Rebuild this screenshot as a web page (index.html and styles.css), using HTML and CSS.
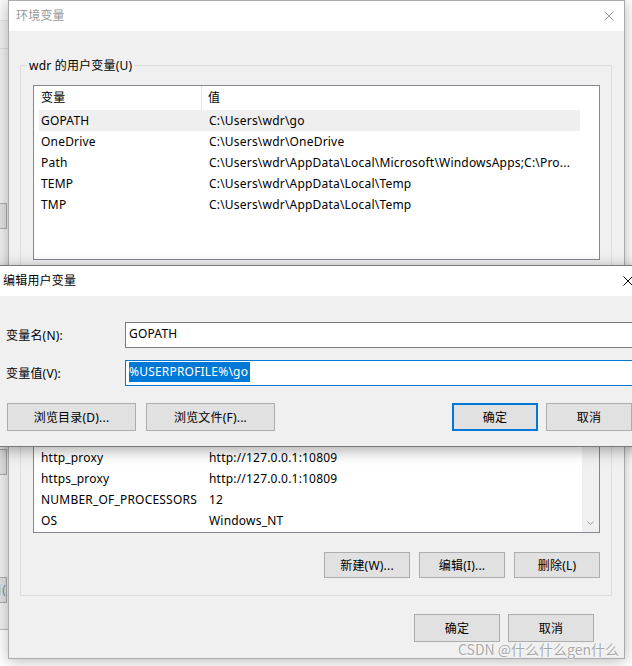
FILE: index.html
```html
<!DOCTYPE html>
<html lang="zh-CN">
<head>
<meta charset="utf-8">
<title>环境变量</title>
<link rel="stylesheet" href="styles.css">
</head>
<body>
<div class="desktop">
  <div class="bgwin">
    <div class="bg-title"></div>
    <div class="bg-line l1"></div>
    <div class="bg-btn b1"></div>
    <div class="bg-btn b2"></div>
    <div class="bg-btn b3">目(</div>
  </div>

  <div class="win main">
    <div class="titlebar">
      <span class="title inactive">环境变量</span>
      <svg class="close inactive-x" width="10" height="10" viewBox="0 0 10 10"><path d="M0.5 0.5L9.5 9.5M9.5 0.5L0.5 9.5" stroke="currentColor" stroke-width="1" fill="none"/></svg>
    </div>
    <div class="main-body">
      <div class="group g1">
        <div class="legend">wdr 的用户变量(U)</div>
        <div class="list">
          <div class="lhead">
            <div class="hcol c1">变量</div>
            <div class="hcol c2">值</div>
          </div>
          <div class="row sel"><span class="cell n">GOPATH</span><span class="cell v">C:\Users\wdr\go</span></div>
          <div class="row"><span class="cell n">OneDrive</span><span class="cell v">C:\Users\wdr\OneDrive</span></div>
          <div class="row"><span class="cell n">Path</span><span class="cell v">C:\Users\wdr\AppData\Local\Microsoft\WindowsApps;C:\Pro...</span></div>
          <div class="row"><span class="cell n">TEMP</span><span class="cell v">C:\Users\wdr\AppData\Local\Temp</span></div>
          <div class="row"><span class="cell n">TMP</span><span class="cell v">C:\Users\wdr\AppData\Local\Temp</span></div>
        </div>
        <div class="btnrow covered">
          <button class="btn">新建(N)...</button>
          <button class="btn">编辑(E)...</button>
          <button class="btn">删除(D)</button>
        </div>
      </div>

      <div class="group g2">
        <div class="legend covered">系统变量(S)</div>
        <div class="list">
          <div class="lhead covered">
            <div class="hcol c1">变量</div>
            <div class="hcol c2">值</div>
          </div>
          <div class="rows2">
            <div class="row covered"><span class="cell n">ComSpec</span><span class="cell v">C:\Windows\system32\cmd.exe</span></div>
            <div class="row covered"><span class="cell n">DriverData</span><span class="cell v">C:\Windows\System32\Drivers\DriverData</span></div>
            <div class="row covered"><span class="cell n">GOROOT</span><span class="cell v">C:\Program Files\Go</span></div>
            <div class="row"><span class="cell n">http_proxy</span><span class="cell v">http://127.0.0.1:10809</span></div>
            <div class="row"><span class="cell n">https_proxy</span><span class="cell v">http://127.0.0.1:10809</span></div>
            <div class="row"><span class="cell n">NUMBER_OF_PROCESSORS</span><span class="cell v">12</span></div>
            <div class="row"><span class="cell n">OS</span><span class="cell v">Windows_NT</span></div>
          </div>
          <div class="vscroll">
            <svg class="arrow-down" width="7" height="4" viewBox="0 0 7 4"><path d="M0.5 0.5L3.5 3.5L6.5 0.5" stroke="#9a9a9a" stroke-width="1" fill="none"/></svg>
          </div>
        </div>
        <div class="btnrow">
          <button class="btn">新建(W)...</button>
          <button class="btn">编辑(I)...</button>
          <button class="btn">删除(L)</button>
        </div>
      </div>

      <div class="footer">
        <button class="btn tall">确定</button>
        <button class="btn tall">取消</button>
      </div>
    </div>
  </div>

  <div class="win edit">
    <div class="titlebar edit-title">
      <span class="title">编辑用户变量</span>
      <svg class="close" width="10" height="10" viewBox="0 0 10 10"><path d="M0.5 0.5L9.5 9.5M9.5 0.5L0.5 9.5" stroke="currentColor" stroke-width="1" fill="none"/></svg>
    </div>
    <div class="edit-body">
      <div class="field">
        <label class="flabel">变量名(N):</label>
        <div class="input">GOPATH</div>
      </div>
      <div class="field f2">
        <label class="flabel">变量值(V):</label>
        <div class="input focus"><span class="selected">%USERPROFILE%\go</span></div>
      </div>
      <div class="edit-btns">
        <button class="btn wide">浏览目录(D)...</button>
        <button class="btn wide">浏览文件(F)...</button>
        <button class="btn tall default push">确定</button>
        <button class="btn tall">取消</button>
      </div>
    </div>
  </div>

  <div class="watermark">CSDN @什么什么gen什么</div>
</div>
</body>
</html>
```

FILE: styles.css
```css
* { box-sizing: border-box; }
html, body { margin: 0; padding: 0; }
body {
  width: 632px;
  height: 666px;
  overflow: hidden;
  background: #ffffff;
  font-family: "Noto Sans", "Noto Sans CJK SC", sans-serif;
  font-size: 12px;
  letter-spacing: 0.2px;
  color: #000;
}
.desktop {
  position: relative;
  width: 632px;
  height: 666px;
  overflow: hidden;
  background: #ffffff;
}
.covered { visibility: hidden; }

/* background window peeking at left */
.bgwin {
  position: absolute;
  left: -300px;
  top: -10px;
  width: 320px;
  height: 640px;
  background: #f0f0f0;
  border: 1px solid #bdbdbd;
}
.bg-title { height: 30px; background: #fafafa; border-bottom: 1px solid #e3e3e3; }
.bg-line { height: 1px; background: #dcdcdc; margin-top: 27px; }
.bg-btn {
  position: absolute;
  left: 200px;
  width: 106px;
  height: 26px;
  background: #e1e1e1;
  border: 1px solid #adadad;
  font-size: 12px;
  line-height: 24px;
  text-align: right;
  color: #888;
}
.b1 { top: 212px; }
.b2 { top: 458px; }
.b3 { top: 586px; }

/* windows */
.win {
  position: absolute;
  background: #f0f0f0;
}
.main {
  left: 8px;
  top: 0;
  width: 617px;
  height: 659px;
  border: 1px solid #aaaaaa;
  box-shadow: 0 2px 14px rgba(0, 0, 0, 0.28);
}
.titlebar {
  height: 30px;
  background: #fff;
  display: flex;
  align-items: center;
  justify-content: space-between;
  padding: 0 10px 0 7px;
}
.title { line-height: 16px; }
.inactive { color: #999; }
.close { display: block; color: #000; }
.inactive-x { color: #999; }

.main-body {
  padding: 34px 12px 0 11px;
}
.group {
  border: 1px solid #dcdcdc;
  padding: 0 11px 17px 12px;
}
.g2 { margin-top: 16px; }
.legend {
  width: max-content;
  height: 17px;
  line-height: 17px;
  margin: -9px 0 0 -6px;
  padding: 0 2px;
  background: #f0f0f0;
}
.list {
  position: relative;
  margin-top: 11px;
  height: 175px;
  border: 1px solid #828790;
  background: #fff;
  overflow: hidden;
}
.lhead {
  height: 24px;
  display: flex;
  width: 546px;
}
.hcol {
  height: 24px;
  line-height: 24px;
}
.hcol.c1 {
  width: 168px;
  padding-left: 7px;
  border-right: 1px solid #e5e5e5;
}
.hcol.c2 {
  flex: 1;
  padding-left: 6px;
}
.rows2 { padding-top: 1px; }
.row {
  height: 21px;
  display: flex;
  align-items: center;
  margin-left: 5px;
  width: 541px;
  white-space: nowrap;
}
.row.sel { background: #efefef; }
.cell.n { width: 170px; padding-left: 2px; }
.cell.v { flex: 1; }

.vscroll {
  position: absolute;
  right: 0;
  top: 0;
  bottom: 0;
  width: 17px;
  background: #f0f0f0;
}
.arrow-down {
  position: absolute;
  left: 5px;
  bottom: 7px;
}

.btnrow {
  display: flex;
  justify-content: flex-end;
  gap: 9px;
  margin-top: 19px;
}
.g1 .btnrow { margin-top: 18px; }
.btn {
  width: 86px;
  height: 26px;
  padding: 0;
  margin: 0;
  background: #e1e1e1;
  border: 1px solid #adadad;
  font-family: inherit;
  font-size: 12px;
  letter-spacing: inherit;
  color: #000;
}
.btn.tall { height: 28px; }
.btn.wide { width: 129px; height: 28px; }
.btn.default { border: 2px solid #0078d7; }
.footer {
  display: flex;
  justify-content: flex-end;
  gap: 8px;
  margin: 18px 18px 0 0;
}

/* edit dialog */
.edit {
  left: -1px;
  top: 265px;
  width: 642px;
  height: 182px;
  border: 1px solid #7a7a7a;
  box-shadow: 0 3px 14px rgba(0, 0, 0, 0.35);
}
.edit-title { padding: 0 8px 0 3px; }
.edit-title .close { margin-right: -1px; }
.edit-body { padding-top: 26px; }
.field {
  display: flex;
  align-items: center;
  height: 26px;
}
.f2 { margin-top: 12px; }
.flabel {
  width: 125px;
  padding-left: 6px;
}
.input {
  flex: 1;
  height: 26px;
  background: #fff;
  border: 1px solid #7a7a7a;
  padding-left: 3px;
  line-height: 22px;
  white-space: nowrap;
}
.input.focus { border-color: #0078d7; }
.selected {
  background: #0078d7;
  color: #fff;
  display: inline-block;
  line-height: 20px;
  padding-right: 2px;
}
.edit-btns {
  display: flex;
  align-items: center;
  margin-top: 17px;
  padding: 0 8px 0 7px;
  gap: 10px;
}
.edit-btns .push { margin-left: auto; }
.edit-btns .btn.tall + .btn.tall { margin-left: -2px; }

.watermark {
  position: absolute;
  left: 458px;
  top: 639px;
  font-size: 14px;
  letter-spacing: 0;
  font-family: "Noto Sans CJK SC", sans-serif;
  color: #a8a8a8;
  white-space: nowrap;
  text-shadow: 0 0 2px #fff, 0 0 2px #fff;
}
```
